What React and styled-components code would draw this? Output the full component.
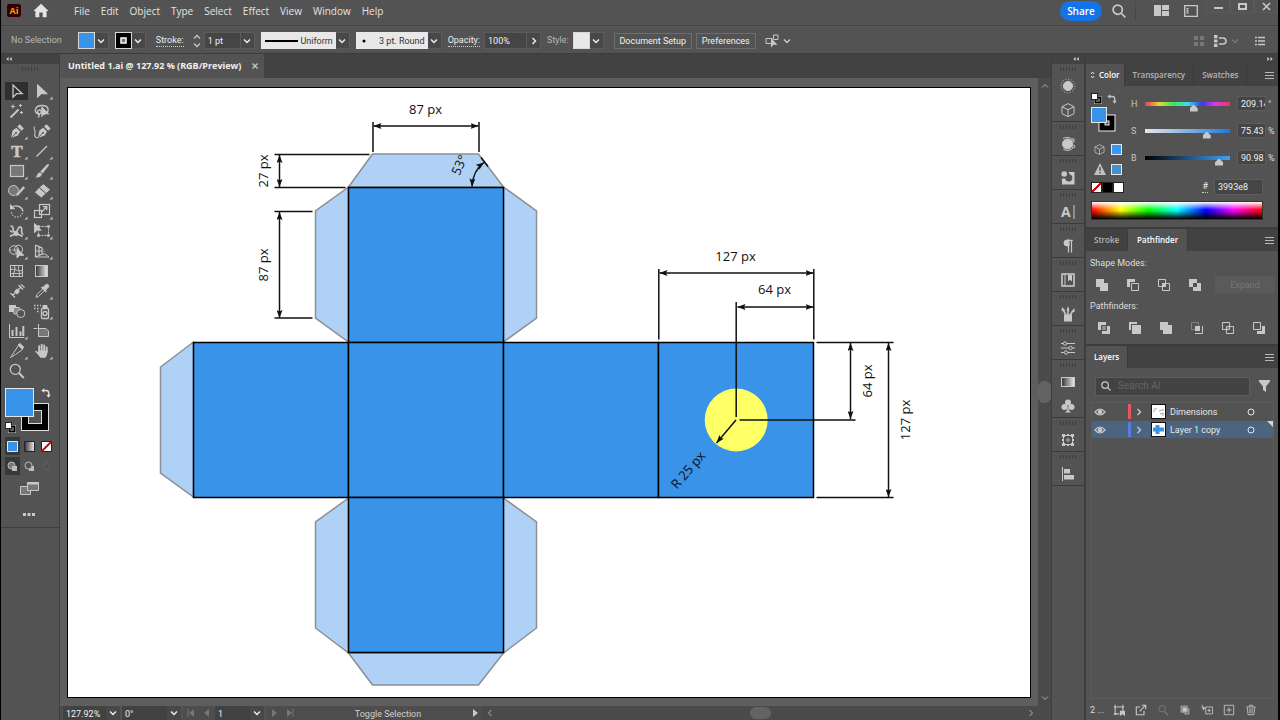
import React from 'react';
import styled, { createGlobalStyle, css } from 'styled-components';

const ui = '"Open Sans", "Noto Sans", sans-serif';
const small = 'Roboto, "Noto Sans", sans-serif';

const GlobalStyle = createGlobalStyle`
* { box-sizing: border-box; }
body {
  margin: 0;
  background: #000;
  color: #dedede;
  font: 9px/12px ${small};
}
button, input, select {
  margin: 0;
  padding: 0;
  border: 0;
  border-radius: 0;
  background: none;
  color: inherit;
  font: inherit;
  outline: 0;
}
svg { display: block; flex: none; }
`;

const Window = styled.div`
height: 100vh;
display: flex;
flex-direction: column;
background: #535353;
border-left: 1px solid #000;
border-right: 2px solid #000;
overflow: hidden;
`;

const MenuBar = styled.header`
display: flex;
align-items: center;
height: 26px;
flex: none;
border-bottom: 1px solid #424242;
padding: 0 0 4px 6px;
color: #e4e4e4;
`;

const Menus = styled.nav`
display: flex;
gap: 11px;
margin-left: 25px;
flex: 1;
`;

const MenuLink = styled.a`
color: inherit;
text-decoration: none;
font: 10px/16px ${ui};
`;

const AppLogo = styled.div`
width: 14px;
height: 13px;
margin-right: 12px;
border-radius: 2px;
background: #330000;
color: #ff9a00;
font: bold 9px/13px ${ui};
text-align: center;
`;

const ShareButton = styled.button`
width: 42px;
height: 20px;
border-radius: 10px;
background: #1473e6;
color: #fff;
font: 600 10px/20px ${ui};
`;

const IconButton = styled.button`
display: flex;
align-items: center;
justify-content: center;
flex: none;
width: ${props => props.$w || 22}px;
height: ${props => props.$h || 20}px;
color: ${props => (props.$dim ? '#777' : '#c8c8c8')};
`;

const WindowButtons = styled.div`
display: flex;
align-self: flex-start;
margin-left: 10px;
button {
  width: 24px;
  height: 13px;
  border: 1px solid #5a5a5a;
  border-top: 0;
}
`;

const Divider = styled.span`
width: 1px;
height: 18px;
background: #484848;
`;

const OptionsBar = styled.div`
display: flex;
align-items: center;
height: 28px;
flex: none;
padding: 1px 8px 0 10px;
border-top: 1px solid #5a5a5a;
border-bottom: 1px solid #3c3c3c;
`;

const Group = styled.div`
display: flex;
align-items: center;
height: 17px;
margin-left: ${props => props.$gap || 6}px;
`;

const OptionLabel = styled.label`
color: ${props => (props.$plain ? '#b8b8b8' : '#ececec')};
${props => !props.$plain && css`border-bottom: 1px dotted #ccc;`}
line-height: 11px;
white-space: nowrap;
`;

const SwatchButton = styled.button`
width: 17px;
height: 17px;
border: 1px solid #d8d8d8;
background: ${props => props.$fill};
display: flex;
align-items: center;
justify-content: center;
`;

const DropCell = styled.button`
width: 14px;
height: 17px;
border: 1px solid #5c5c5c;
border-left: 0;
background: #484848;
color: #f0f0f0;
display: flex;
align-items: center;
justify-content: center;
`;

const Field = styled.input`
width: ${props => props.$w}px;
height: ${props => props.$h || 17}px;
padding-left: 3px;
background: #454545;
border: 1px solid #5c5c5c;
color: #f0f0f0;
`;

const PreviewSelect = styled.div`
display: flex;
align-items: center;
gap: 2px;
width: ${props => props.$w}px;
height: 17px;
padding: 0 3px 0 4px;
background: #e8e8e8;
color: #333;
select {
  flex: 1;
  min-width: 0;
  height: 15px;
  appearance: none;
  text-align: right;
}
`;

const BarButton = styled.button`
height: 16px;
width: ${props => props.$w}px;
border: 1px solid #6e6e6e;
color: #f2f2f2;
white-space: nowrap;
`;

const Spacer = styled.div`
flex: 1;
`;

const Workspace = styled.main`
flex: 1;
min-height: 0;
display: grid;
grid-template-columns: 59px 1fr 34px 192px;
`;

const Column = styled.section`
display: flex;
flex-direction: column;
min-width: 0;
min-height: 0;
background: #535353;
border-right: ${props => props.$line || 0}px solid #3e3e3e;
`;

const CollapseStrip = styled.div`
height: 10px;
flex: none;
display: flex;
align-items: center;
justify-content: ${props => (props.$start ? 'flex-start' : 'flex-end')};
padding: 0 5px;
background: #424242;
color: #c8c8c8;
`;

const Grip = styled.div`
width: 16px;
height: 4px;
margin: 3px auto 2px;
background: repeating-linear-gradient(90deg, #3e3e3e 0 1px, #535353 1px 3px);
`;

const ToolGrid = styled.div`
display: grid;
grid-template-columns: 23px 23px;
grid-auto-rows: 18px;
gap: 2px;
padding: 9px 0 0 4px;
`;

const ToolButton = styled.button`
width: 23px;
height: 18px;
color: #c8c8c8;
background: ${props => (props.$active ? '#2f2f2f' : 'none')};
`;

const PaintWells = styled.div`
padding: 7px 0 0 2px;
`;

const PaintModes = styled.div`
display: grid;
grid-template-columns: repeat(3, 15px);
gap: 2px;
padding: 2px 0 0 4px;
`;

const ModeButton = styled.button`
height: 18px;
display: flex;
align-items: center;
justify-content: center;
background: ${props => (props.$active ? '#383838' : 'none')};
color: ${props => (props.disabled ? '#6a6a6a' : '#bdbdbd')};
`;

const ToolFooter = styled.div`
display: flex;
flex-direction: column;
align-items: center;
gap: 6px;
padding: 3px 2px 3px 0;
border-bottom: 1px solid #3e3e3e;
`;

const TabStrip = styled.div`
display: flex;
height: ${props => props.$h || 22}px;
flex: none;
background: #424242;
`;

const DocTab = styled.div`
display: flex;
align-items: center;
gap: 10px;
padding: 0 5px 0 8px;
background: #535353;
color: #f0f0f0;
font: bold 9px/12px ${ui};
white-space: nowrap;
`;

const Pasteboard = styled.div`
flex: 1;
min-height: 0;
display: grid;
grid-template-columns: 1fr 13px;
background: #5e5e5e;
`;

const ArtboardArea = styled.div`
display: flex;
min-width: 0;
min-height: 0;
padding: 9px 7px 8px 7px;
`;

const Artboard = styled.svg`
flex: 1;
min-width: 0;
background: #fff;
border: 1px solid #000;
font: 13px ${ui};
`;

const Scroll = styled.div`
display: flex;
flex-direction: ${props => (props.$across ? 'row' : 'column')};
flex: 1;
align-items: center;
justify-content: space-between;
padding: ${props => (props.$across ? '0 16px 0 4px' : '4px 0')};
background: #4a4a4a;
color: #b0b0b0;
`;

const Thumb = styled.div`
width: ${props => (props.$across ? 21 : 13)}px;
height: ${props => (props.$across ? 12 : 22)}px;
border-radius: 6px;
background: #636363;
`;

const StatusBar = styled.footer`
height: 14px;
flex: none;
display: flex;
align-items: stretch;
padding-left: 3px;
background: #4d4d4d;
`;

const StatusField = styled.input`
width: ${props => props.$w}px;
padding: 2px 0 0 3px;
background: #424242;
color: #f0f0f0;
`;

const StatusText = styled.div`
flex: 0 0 170px;
padding-left: 10px;
color: #d0d0d0;
line-height: 17px;
text-align: center;
`;

const StatusDrop = styled(DropCell)`
height: 14px;
width: 16px;
border-width: 0 2px 0 0;
border-color: #535353;
`;

const PageButton = styled.button`
width: 16px;
display: flex;
align-items: center;
justify-content: center;
color: #767676;
`;

const DockGroup = styled.div`
display: flex;
flex-direction: column;
align-items: center;
gap: 1px;
border-bottom: 1px solid #3c3c3c;
`;

const Tab = styled.button`
display: flex;
align-items: center;
gap: 4px;
padding: 0 ${props => props.$pad || 8}px;
border-right: 1px solid #3a3a3a;
background: ${props => (props.$active ? '#535353' : 'none')};
color: ${props => (props.$active ? '#fff' : '#b4b4b4')};
font: 600 8px/12px ${ui};
`;

const PanelMenu = styled.button`
width: 18px;
margin-left: auto;
color: #b8b8b8;
display: flex;
align-items: center;
justify-content: center;
`;

const Panel = styled.section`
display: flex;
flex-direction: column;
border-bottom: 2px solid #3c3c3c;
${props => props.$grow && css`flex: 1; border-bottom: 0;`}
`;

const ColorBody = styled.div`
display: grid;
grid-template-columns: 31px 1fr;
column-gap: 9px;
padding: 4px 3px 7px 5px;
`;

const PaintHead = styled.div`
display: flex;
align-items: center;
gap: 5px;
height: 17px;
color: #c0c0c0;
`;

const PaintPair = styled.div`
height: 32px;
`;

const SliderRow = styled.div`
display: grid;
grid-template-columns: 14px 85px 28px 1fr;
align-items: center;
height: 27px;
input[type='text'] { margin-left: 7px; }
span { margin-left: 10px; }
label { color: #c4c4c4; }
`;

const Range = styled.input`
appearance: none;
width: 85px;
height: 14px;
&::-webkit-slider-runnable-track {
  height: 4px;
  background: ${props => props.$track};
}
&::-webkit-slider-thumb {
  appearance: none;
  width: 8px;
  height: 7px;
  margin-top: 3px;
  background: #c8c8c8;
  clip-path: polygon(50% 0, 100% 55%, 100% 100%, 0 100%, 0 55%);
}
`;

const HexRow = styled.div`
display: flex;
align-items: center;
justify-content: space-between;
grid-column: 1 / -1;
padding-right: 12px;
height: 16px;
`;

const Hex = styled.div`
display: flex;
align-items: center;
gap: 6px;
`;

const SwatchRow = styled.div`
display: flex;
align-items: center;
justify-content: space-between;
height: 20px;
padding-left: 3px;
color: #c0c0c0;
`;

const MiniSwatch = styled.button`
width: 11px;
height: 11px;
border: 1px solid #e8e8e8;
background: ${props => props.$fill};
`;

const Trio = styled.div`
display: flex;
button { border: 1px solid #222; }
`;

const Spectrum = styled.div`
grid-column: 1 / -1;
height: 19px;
margin: 6px 12px 0 0;
border: 1px solid #333;
background:
  linear-gradient(#fff, rgba(255, 255, 255, 0) 45%, rgba(0, 0, 0, 0) 50%, #000),
  linear-gradient(90deg, #f00, #ff0 17%, #0f0 33%, #0ff 50%, #00f 67%, #f0f 83%, #f00);
`;

const PathBody = styled.div`
padding: 6px 3px 1px 4px;
h4 {
  margin: 0;
  font: 9px/12px ${small};
}
`;

const PathRow = styled.div`
display: flex;
align-items: center;
height: 31px;
padding-left: ${props => props.$pad}px;
gap: 9px;
color: #c8c8c8;
`;

const ExpandButton = styled.button`
width: 60px;
height: 17px;
margin-left: auto;
background: #5a5a5a;
color: #777;
`;

const LayersBody = styled.div`
flex: 1;
display: flex;
flex-direction: column;
padding: 8px 4px 3px 5px;
`;

const SearchRow = styled.div`
display: flex;
align-items: center;
gap: 8px;
padding: 0 4px 6px 4px;
color: #c8c8c8;
`;

const SearchBox = styled.label`
flex: 1;
display: flex;
align-items: center;
gap: 7px;
height: 19px;
padding-left: 5px;
background: #434343;
border: 1px solid #5c5c5c;
input { width: 120px; }
input::placeholder { color: #646464; font-size: 10px; opacity: 1; }
`;

const LayerList = styled.ul`
flex: 1;
margin: 0;
padding: 0;
list-style: none;
border: 1px solid #5c5c5c;
`;

const LayerRow = styled.li`
display: grid;
grid-template-columns: 36px 3px 20px 15px 1fr 16px 10px;
align-items: center;
height: 17px;
margin-bottom: 1px;
background: ${props => (props.$selected ? '#4b6480' : 'none')};
color: #e8e8e8;
`;

const LayerColor = styled.i`
height: 15px;
background: ${props => props.$color};
`;

const LayerName = styled.span`
padding-left: 4px;
white-space: nowrap;
`;

const LayerThumb = styled.svg`
background: #fff;
border: 1px solid #111;
`;

const Corner = styled.i`
align-self: start;
justify-self: end;
border-top: 6px solid #d8d8d8;
border-left: 6px solid transparent;
`;

const LayerFooter = styled.div`
display: flex;
align-items: center;
justify-content: space-between;
height: 18px;
padding: 0 20px 2px 4px;
color: #d8d8d8;
button { width: 14px; }
`;

// line icon with its own view box
const Svg = ({ w = 14, h = w, children, sw = 1, fill = 'none' }) => (
    <svg width={w} height={h} viewBox={`0 0 ${w} ${h}`} fill={fill} stroke="currentColor" strokeWidth={sw} aria-hidden="true">
        {children}
    </svg>
);

const arrows = {
    down: 'M1 2.5 4 5.5 7 2.5',
    up: 'M1 5.5 4 2.5 7 5.5',
    right: 'M2.5 1 5.5 4 2.5 7',
    left: 'M5.5 1 2.5 4 5.5 7'
};

const Chevron = ({ dir = 'down', sw = 1.4 }) => <Svg w={8} sw={sw}><path d={arrows[dir]} /></Svg>;

const Double = ({ right }) => (
    <svg width="6" height="4" viewBox="0 0 7 5" fill="currentColor" aria-hidden="true">
        <path d={right ? 'M0 0 3 2.5 0 5zM4 0 7 2.5 4 5z' : 'M3 0 0 2.5 3 5zM7 0 4 2.5 7 5z'} />
    </svg>
);

const Lines = () => <Svg w={9}><path d="M0 1.5h9M0 4.5h9M0 7.5h9" /></Svg>;
const Search = ({ w = 14 }) => (
    <svg width={w} height={w} viewBox="0 0 14 14" fill="none" stroke="currentColor" strokeWidth="1.7" aria-hidden="true">
        <circle cx="5.7" cy="5.7" r="4.6" /><path d="m9 9 4.3 4.3" />
    </svg>
);
const Cube = ({ w = 13 }) => (
    <svg width={w} height={w} viewBox="0 0 14 14" fill="none" stroke="currentColor" aria-hidden="true">
        <path d="M7 .8 12.8 3.7v6.8L7 13.3 1.2 10.5V3.7zM1.2 3.7 7 6.6l5.8-2.9M7 6.6v6.7" />
    </svg>
);

const Swap = () => (
    <Svg w={10} sw={1.4}>
        <path d="M2.5 2.5h2.7q2.5 0 2.5 2.5v2.5" /><path d="M3.3.2v4.6L.3 2.5zM5.4 6.8h4.4L7.6 9.8z" fill="currentColor" stroke="none" />
    </Svg>
);

const DefaultPaint = () => (
    <Svg w={11}>
        <rect x="4.5" y="4.5" width="5" height="5" stroke="#ddd" strokeWidth="3" />
        <rect x="4.5" y="4.5" width="5" height="5" stroke="#000" strokeWidth="2" />
        <rect x=".5" y=".5" width="6" height="6" fill="#fff" stroke="#222" />
    </Svg>
);

const nib = <g fill="currentColor" stroke="none"><path d="M6 16 7.6 8.6 11.4 5.8 15.2 9.6 12.8 13.6z" /><path d="m12.3 4.6 2.4-2.4 4.2 4.2-2.4 2.4z" /><path d="m6.3 15.7 4.6-4.6" stroke="#535353" strokeWidth=".9" /><circle cx="11" cy="11" r="1" fill="#535353" /></g>;

// tools are drawn on the 23x18 button; the third value adds the flyout corner
const tools = [
    ['Selection', <path d="M8 3v12.2l3.6-3.5h5.6z" strokeWidth="1.3" />, 0],
    ['Direct Selection', <path d="M7.5 2.5v13l3.8-3.7h6z" fill="currentColor" />, 1],
    ['Magic Wand', <><path d="m5.5 15.5 8-8" strokeWidth="1.8" /><path d="M8 2.5v4M6 4.5h4M15.5 2v3M14 3.5h3M16.5 9v3M15 10.5h3" /></>, 0],
    ['Lasso', <><path d="M9 12.2C3 11 4.5 3.5 12 3.5s8 7 2 8.5M9.5 12c2.8-1.2 1.8-4 0-4s-2.7 2-1.3 3.3c1.4 1.3 1.5 2.7-.2 4.2" strokeWidth="1.4" /><path d="M11.8 5v9.5l2.5-2.7h4.4z" fill="currentColor" /></>, 0],
    ['Pen', nib, 1],
    ['Curvature', <><g transform="translate(1.8)">{nib}</g><path d="M4.5 4.5c-2 3 2 4.5.4 7.2-1 1.8.3 3.8 3.1 4.3" strokeWidth="1.1" /></>, 0],
    ['Type', <text x="12" y="15" textAnchor="middle" fill="currentColor" stroke="currentColor" strokeWidth=".6" fontFamily="Liberation Serif, serif" fontWeight="bold" fontSize="17">T</text>, 1],
    ['Line Segment', <path d="M6.5 14.5 17 4" strokeWidth="1.3" />, 1],
    ['Rectangle', <rect x="5.5" y="3.5" width="13" height="11" fill="#777" strokeWidth="1.2" />, 1],
    ['Paintbrush', <g fill="currentColor" stroke="none"><path d="M18.5 2 19 3.2l-6.4 8.3-2.3-1.9 7-7.4z" /><path d="M9.6 10.4c1.7 0 2.5 1.2 2 2.7-.7 2-3.3 2.8-6.1 2.2 1.8-.8 1-3.8 4.1-4.9z" /></g>, 1],
    ['Shaper', <><circle cx="8.5" cy="8.5" r="5" fill="#777" /><path d="m10.5 14.5.8-3L18.3 4l2 1.8-7 7.6z" fill="currentColor" stroke="#535353" strokeWidth=".5" /></>, 1],
    ['Eraser', <><path d="m10 5.5 3.4-2.8 6 5-3.600 3.200z" fill="currentColor" /><path d="m9.500 6-4 4.300 5.800 4.700 4-3.700z" fill="currentColor" /><path d="m9.500 5.800 6.300 5.400" stroke="#535353" /></>, 1],
    ['Rotate', <><path d="M6.8 5.5C11 2 17.5 5 17.8 9.5" strokeWidth="1.4" /><path d="M17.5 11C15.5 17 6.5 16.3 6.3 9.5" strokeDasharray="1.2 1.6" strokeWidth="1.4" /><path d="M5 1.8v5.4h5.4z" fill="currentColor" stroke="none" /></>, 1],
    ['Scale', <><rect x="9.5" y="2.5" width="10" height="10" strokeWidth="1.2" /><rect x="4.500" y="8.500" width="7" height="7" strokeWidth="1.2" /><path d="m12 9.500 4.500-4.500M13 4.700h3.800v3.600" strokeWidth="1.2" /></>, 1],
    ['Width', <><path d="M5.5 4c5 0 .5 6 4.5 6s2-6 5.5-5c3 1-1 6 2.8 7.5M5 8.5l2.5 2M5 14.5c4-3 8-3 12.5 0" strokeWidth="1.6" /><circle cx="11" cy="11.5" r="2.1" fill="currentColor" /></>, 1],
    ['Free Transform', <><rect x="8.5" y="4.5" width="10" height="9" strokeDasharray="2 1" /><path d="M7.5 3.5h2v2h-2zM17.5 3.5h2v2h-2zM7.5 12.5h2v2h-2zM17.5 12.5h2v2h-2z" fill="currentColor" strokeWidth=".6" /><path d="M4.5 1.5v9.2l2.7-2.6h4z" fill="currentColor" /></>, 1],
    ['Shape Builder', <><ellipse cx="9" cy="8" rx="4.5" ry="4.3" /><ellipse cx="13.5" cy="7.5" rx="4" ry="4.3" /><path d="M5 8h9" strokeDasharray="1.3 1" /><path d="M12 6.5V16l2.8-2.7h4z" fill="currentColor" /></>, 1],
    ['Perspective Grid', <><path d="M5.500 3v12M5.500 3l6.500 3v6l-6.500 3M5.500 9H12M9 4.500v9" strokeWidth="1.2" /><path d="M12 12h3l4 3H5.500" /><path d="M13 9.500h2M13 7.500h1" stroke="#8a8a8a" /></>, 1],
    ['Mesh', <><rect x="5.5" y="3.5" width="12" height="11" /><path d="M5.5 8c4-3 7 3 12 0M5.5 12c3-2 8 1 12-1M9 3.5c3 4-2 7 0 11M14 3.5c-2 4 2 7 0 11" /></>, 0],
    ['Gradient', <><defs><linearGradient id="g1"><stop stopColor="#333" /><stop offset="1" stopColor="#eee" /></linearGradient></defs><rect x="5.5" y="3.5" width="12" height="11" fill="url(#g1)" /></>, 0],
    ['Measure', <><path d="m7.5 13.5 8.5-8.5M5.5 11l4.5 4.5M13.5 3l4.5 4.5M16 2.5l3.5 3" strokeWidth="1.2" /><path d="m9 9.5 3-3 3 3-3 3z" fill="currentColor" stroke="none" /></>, 0],
    ['Eyedropper', <><path d="M12.8 5.7 15.4 3c2-2 4.6.6 2.7 2.6l-2.6 2.6z" fill="currentColor" /><path d="m11.5 5 4.8 4.8" strokeWidth="1.7" /><path d="M12.5 7 7 12.5 6 15.3l2.7-1L14.3 9" /></>, 1],
    ['Blend', <><rect x="4" y="3" width="7" height="7" fill="currentColor" stroke="none" /><rect x="8.500" y="5.500" width="6.500" height="6.500" rx="1.500" fill="#8a8a8a" /><circle cx="15.800" cy="11.500" r="4" fill="#535353" /></>, 0],
    ['Symbol Sprayer', <><rect x="11.5" y="6.5" width="7" height="10" rx="1" strokeWidth="1.3" /><path d="M13 3.5h4v3h-4z" fill="currentColor" /><circle cx="15" cy="11.5" r="2" strokeWidth="1.3" /><path d="M4 3.5h1.5M7 3.5h1.5M10 3.5h1M4 6.5h1.5M7 6.5h1.5M7 9.5h1.5" strokeWidth="1.4" /></>, 1],
    ['Column Graph', <><path d="M4.5 2v13.5h15" /><path d="M7.5 8v6M11.5 5v9M15.5 9.5V14M18.3 4v10" strokeWidth="2" /></>, 1],
    ['Artboard', <><path d="M8.500 2v12M3.500 6.500h4" /><path d="M8.500 6.500H16l2.500 2.500v5.500h-10z" fill="#777" /></>, 0],
    ['Slice', <><path d="m5.5 15.5 8-12 4 4-7 5z" /><path d="m13 3 1.8-1.6 4 3.8-1.7 2" fill="currentColor" /></>, 1],
    ['Hand', <><path d="M9.2 9V4.2M11.7 8.5V2.8M14.2 8.5V3.5M16.7 9.5V5.4" strokeWidth="1.9" strokeLinecap="round" /><path d="M8.2 8.5h9.4c0 4-1 5.5-2.2 7.3h-5C9 14 7.3 11.4 5 9.8c.3-1.4 2-1 3.2.6z" fill="currentColor" stroke="none" /></>, 1],
    ['Zoom', <><circle cx="10.3" cy="7.3" r="5" strokeWidth="1.3" /><path d="m14 11 4.8 5" strokeWidth="2" /></>, 0]
];

const dock = [
    [
        ['Appearance', <><circle cx="8" cy="8" r="4.6" fill="currentColor" /><circle cx="8" cy="8" r="6.9" strokeDasharray="1 1.7" /></>],
        ['3D', <path d="M8 1.6 14 4.7v7L8 14.6l-6-2.9v-7zM2 4.7l6 3 6-3M8 7.7v6.9" />]
    ],
    [['Recolor', <><circle cx="7.5" cy="8" r="5" fill="currentColor" /><path d="M3 2.5C6 .5 12.5 1 14 6.5M14.3 9c-1 5-7 7-11 4" /><circle cx="13" cy="4" r="1.3" fill="#535353" /><circle cx="13.5" cy="10.5" r="1.3" fill="#535353" /></>]],
    [['Symbols', <><circle cx="4.2" cy="4" r="2.8" fill="currentColor" stroke="none" /><path d="M8.5 2H14.5V14.5H2V8.5h3.2a3.6 3.6 0 1 0 4.6-4z" fill="currentColor" stroke="none" /></>]],
    [['Character', <><text x="1" y="13" fill="currentColor" stroke="none" fontFamily="Open Sans, sans-serif" fontWeight="bold" fontSize="14">A</text><path d="M14 1v14" /></>]],
    [['Paragraph', <><path d="M8.5 2v12.5M11.5 2v12.5M12.8 2.4H7" strokeWidth="1.2" /><path d="M9 2v6H7a3 3 0 0 1 0-6z" fill="currentColor" /></>]],
    [['Libraries', <><rect x="2" y="2" width="12" height="12" strokeWidth="1.6" /><path d="M5 2v12" /><path d="M8 3h4v6.5l-2-1.7-2 1.7z" fill="currentColor" stroke="none" /></>]],
    [['Brushes', <><path d="M4 8.500h8v7H4z" fill="currentColor" stroke="none" /><path d="M6 9 3 3.500M8 9V2.500M10 9l3-4" strokeWidth="1.600" /><path d="M1.500 5 2 1l3.500 3.500zM6.500 4.500 8 0l1.500 4.500zM11 6l3.500-4v4z" fill="currentColor" stroke="none" /></>]],
    [['Properties', <><path d="M1 3.5h14M1 8h14M1 12.5h14" /><circle cx="5" cy="3.5" r="1.7" fill="#535353" /><circle cx="10.5" cy="8" r="1.7" fill="#535353" /><circle cx="6" cy="12.5" r="1.7" fill="#535353" /></>]],
    [
        ['Gradient', <rect x="1.5" y="3.5" width="13" height="9" fill="url(#g1)" />],
        ['Symbols library', <g fill="currentColor" stroke="none"><circle cx="8" cy="4.5" r="3" /><circle cx="4.5" cy="9" r="3" /><circle cx="11.5" cy="9" r="3" /><path d="m8 7 1 5.5 2 2H5l2-2z" /></g>]
    ],
    [['Transform', <><rect x="3.5" y="3.5" width="9" height="9" /><path d="M2 2h3v3H2zM11 2h3v3h-3zM2 11h3v3H2zM11 11h3v3h-3zM7 2h2v2H7zM7 12h2v2H7zM2 7h2v2H2zM12 7h2v2h-2z" fill="currentColor" stroke="none" /><path d="M8 6v4M6 8h4" strokeWidth=".8" /></>]],
    [['Align', <><path d="M2.5 1v14" /><path d="M4 3h6v4.5H4zM4 9h10v4.5H4z" fill="currentColor" stroke="none" /></>]]
];

const f = { fill: 'currentColor', stroke: 'none' };
const shapeModes = [
    ['Unite', <path d="M1 1h8v4h4v8H5V9H1z" {...f} />],
    ['Minus Front', <><path d="M1 1h8v3H4v5H1z" {...f} /><path d="M5.5 5.5h7v7h-7z" /></>],
    ['Intersect', <><path d="M1.5 1.5h7v7h-7zM5.5 5.5h7v7h-7z" /><path d="M5 5h4v4H5z" {...f} /></>],
    ['Exclude', <path d="M1 1h8v4h4v8H5V9H1zM5 5v4h4V5z" fillRule="evenodd" {...f} />]
];
const pathfinders = [
    ['Divide', <><path d="M1 1h8v3H4v5H1zM10 5h3v8H5v-3h5z" {...f} /><path d="M5 5h4v4H5z" fill="currentColor" fillOpacity=".5" stroke="none" /></>],
    ['Trim', <><path d="M1 1h8v2H3v6H1z" {...f} /><path d="M4 4h9v9H4z" {...f} /></>],
    ['Merge', <path d="M1 1h8v3h4v9H4V9H1z" {...f} />],
    ['Crop', <><path d="M1.5 1.5h7v7h-7z" strokeOpacity=".4" /><path d="M12.5 5v7.5H5" /><path d="M5 5h5v5H5z" {...f} /></>],
    ['Outline', <><path d="M1.5 1.5h7v7h-7zM5.5 5.5h7v7h-7z" /><circle cx="7" cy="7" r="1.5" strokeWidth=".7" /></>],
    ['Minus Back', <><path d="M1.5 1.5h7v7h-7z" /><path d="M10 5h3v8H5v-3h5z" {...f} /></>]
];

const layerActions = [
    ['Collect', <><path d="M2.5 1v12M1 3.5h12M11.5 1v7M1 11.5h6" strokeWidth="1.3" /><path d="M8 8h6v6l-3-2-3 2z" {...f} /></>],
    ['Export', <path d="M6 3.5H1.5v9h9V8M5.5 8.5l6.5-7M8 1.5h4.5V6" strokeWidth="1.3" />],
    ['Locate', <><circle cx="6" cy="5.5" r="3.8" strokeOpacity=".35" /><path d="m9 9 4 4" strokeOpacity=".35" strokeWidth="1.5" /></>],
    ['Clipping Mask', <><path d="M2.5 2.5h7v7h-7zM6 11.5h5.5V5" /><path d="M4 4h5v5H4z" {...f} /></>],
    ['Sublayer', <><path d="M5.5 3.5h8v8h-8zM9.5 5.5v4M7.5 7.5h4M1.5 1v4H4" /><path d="M2.500 2.500 5 5 2.500 7.500z" {...f} /></>],
    ['New Layer', <path d="M1.5 1.5h11v11h-11zM7 4v6M4 7h6" />],
    ['Delete', <><path d="M1.5 3.5h11M5 3V1.5h4V3M2.8 4l.7 8.5h7l.7-8.5" /><path d="M5.5 5v6M7 5v6M8.5 5v6" strokeWidth=".8" /></>]
];

const flaps = [
    '348,187 372,154 478,154 503,187',
    '348,187 315,211 315,318 348,342',
    '503,187 536,211 536,318 503,342',
    '193,342 160,367 160,473 193,497',
    '348,498 315,522 315,628 348,653',
    '503,498 536,522 536,628 503,653',
    '348,653 372,685 478,685 503,653'
];

const faces = [
    [348, 187],
    [193, 342],
    [348, 342],
    [503, 342],
    [658, 342],
    [348, 497]
];

// [x1, y1, x2, y2] of every line that carries a head at both ends
const measures = [
    [373, 126, 478, 126],
    [279, 155, 279, 187],
    [279, 212, 279, 318],
    [659, 273, 813, 273],
    [737, 307, 813, 307],
    [850, 343, 850, 419],
    [888, 343, 888, 497]
];

const labels = [
    ['87 px', 425, 114, 0],
    ['27 px', 267, 171, -90],
    ['87 px', 267, 265, -90],
    ['127 px', 735, 261, 0],
    ['64 px', 774, 294, 0],
    ['64 px', 871, 381, -90],
    ['127 px', 909, 420, -90],
    ['R 25 px', 691, 473, -49],
    ['53°', 463, 167, -65]
];

const BoxNet = () => (
    <Artboard viewBox="68 88 961 609" role="img" aria-label="Box net with dimensions">
        <defs>
            <marker id="head" viewBox="0 0 8 6" refX="8" refY="3" markerWidth="8" markerHeight="6" markerUnits="userSpaceOnUse" orient="auto-start-reverse">
                <path d="M0 0 8 3 0 6 1.5 3z" fill="#111" />
            </marker>
        </defs>
        <g fill="#b0d1f6" stroke="#8b8f94" strokeWidth="1.5">
            {flaps.map(points => <polygon key={points} points={points} />)}
        </g>
        <g fill="#3993e8" stroke="#000" strokeWidth="1.5">
            {faces.map(([x, y]) => <rect key={`${x}-${y}`} x={x} y={y + 0.5} width="155" height="155" />)}
        </g>
        <circle cx="735.7" cy="420" r="31.5" fill="#ffff66" />
        <g fill="none" stroke="#111" strokeWidth="1.5">
            <path d="M372.5 122v30M478.5 122v30M274 154.500h95M274 187.500h71M274 211.500h38M274 318h38" />
            <path d="M658.3 269v70.500M813.3 269v70.500M735.7 302v115M739 420h116M816 342.500h77M816 497.500h77" />
            {measures.map(([x1, y1, x2, y2]) => (
                <line key={`${x1}-${y1}`} x1={x1} y1={y1} x2={x2} y2={y2} markerStart="url(#head)" markerEnd="url(#head)" />
            ))}
            <line x1="735.5" y1="420" x2="716" y2="443" markerEnd="url(#head)" />
            <path d="M471.5 186.5C472 176 476 168 483.5 162.500" markerStart="url(#head)" markerEnd="url(#head)" />
            <path d="m480.5 157.5 7 9" />
        </g>
        {labels.map(([text, x, y, turn]) => (
            <text key={`${x}-${y}`} x={x} y={y} textAnchor="middle" transform={`rotate(${turn} ${x} ${y})`} fill="#111">{text}</text>
        ))}
    </Artboard>
);

const Wells = () => (
    <Svg w={50} h={48}>
        <rect x="18.5" y="16.5" width="27" height="27" fill="#000" stroke="#ddd" />
        <rect x="25.5" y="23.5" width="13" height="13" fill="#535353" stroke="#ddd" />
        <rect x="2.5" y="1.5" width="28" height="28" fill="#3993e8" stroke="#e6e6e6" />
        <g transform="translate(38 1)"><path d="M2.5 2.5h2.7q2.5 0 2.5 2.5v2.5" strokeWidth="1.4" /><path d="M3.3.2v4.6L.3 2.5zM5.4 6.8h4.4L7.6 9.8z" {...f} /></g>
        <g transform="translate(2 35)"><rect x="4.5" y="4.5" width="5" height="5" stroke="#ddd" strokeWidth="3" /><rect x="4.5" y="4.5" width="5" height="5" stroke="#000" strokeWidth="2" /><rect x=".5" y=".5" width="6" height="6" fill="#fff" stroke="#222" /></g>
    </Svg>
);

const menus = ['File', 'Edit', 'Object', 'Type', 'Select', 'Effect', 'View', 'Window', 'Help'];

const TopBar = () => (
    <MenuBar>
        <AppLogo>Ai</AppLogo>
        <Svg w={16} h={15}><path d="M8 .8 15.6 8h-2v6.300H9.700V9.500H6.300v4.800H2.400V8h-2z" {...f} /></Svg>
        <Menus>{menus.map(name => <MenuLink key={name} href="#">{name}</MenuLink>)}</Menus>
        <ShareButton>Share</ShareButton>
        <IconButton $w={33} aria-label="Search"><Search /></IconButton>
        <Divider />
        <IconButton $w={50} aria-label="Arrange"><Svg w={15} h={11}><path d="M0 0h7v11H0zM8 0h7v5H8zM8 6h7v5H8z" {...f} /></Svg></IconButton>
        <IconButton $w={10} aria-label="Workspace"><Svg w={14} h={12}><path d="M.7.7h12.600v10.600H.7z" strokeWidth="1.3" /><path d="M3.500 3v6" strokeWidth="2" strokeDasharray="1.5 .5" /></Svg></IconButton>
        <WindowButtons>
            <IconButton aria-label="Minimize"><Svg w={9} sw={2}><path d="M0 6h9" /></Svg></IconButton>
            <IconButton aria-label="Maximize"><Svg w={9} h={7} sw={2}><path d="M1 1h7v5H1z" /></Svg></IconButton>
            <IconButton aria-label="Close"><Svg w={9} sw={1.6}><path d="m1 1 7 7M8 1 1 8" /></Svg></IconButton>
        </WindowButtons>
    </MenuBar>
);

const Options = () => (
    <OptionsBar>
        <OptionLabel as="span" $plain>No Selection</OptionLabel>
        <Group $gap={16}>
            <SwatchButton $fill="#3993e8" aria-label="Fill" />
            <DropCell aria-label="Fill options"><Chevron /></DropCell>
        </Group>
        <Group>
            <SwatchButton $fill="#000" aria-label="Stroke"><Svg w={7} sw={1.5}><path d="M1 1h5v5H1z" fill="#777" stroke="#fff" /></Svg></SwatchButton>
            <DropCell aria-label="Stroke options"><Chevron /></DropCell>
        </Group>
        <Group $gap={10}>
            <OptionLabel htmlFor="weight">Stroke:</OptionLabel>
        </Group>
        <Group>
            <IconButton $w={14} aria-label="Step weight"><Svg w={8} h={14} sw={1.3}><path d="M1 4.5 4 1.5 7 4.5M1 9.5 4 12.5 7 9.5" /></Svg></IconButton>
            <Field id="weight" $w={37} defaultValue="1 pt" />
            <DropCell aria-label="Weights"><Chevron /></DropCell>
        </Group>
        <Group>
            <PreviewSelect $w={75}>
                <Svg w={33} h={2} sw={2}><path d="M0 1h33" stroke="#000" /></Svg>
                <select aria-label="Width profile"><option>Uniform</option></select>
            </PreviewSelect>
            <DropCell aria-label="Profiles"><Chevron /></DropCell>
        </Group>
        <Group>
            <PreviewSelect $w={72}>
                <Svg w={8}><circle cx="4" cy="4" r="1.5" fill="#000" stroke="none" /></Svg>
                <select aria-label="Brush"><option>3 pt. Round</option></select>
            </PreviewSelect>
            <DropCell aria-label="Brushes"><Chevron /></DropCell>
        </Group>
        <Group>
            <OptionLabel htmlFor="opacity">Opacity:</OptionLabel>
        </Group>
        <Group $gap={4}>
            <Field id="opacity" $w={43} defaultValue="100%" />
            <DropCell aria-label="Opacity slider"><Chevron dir="right" /></DropCell>
        </Group>
        <Group>
            <OptionLabel as="span" $plain>Style:</OptionLabel>
        </Group>
        <Group $gap={4}>
            <SwatchButton $fill="#e8e8e8" aria-label="Style" />
            <DropCell aria-label="Styles"><Chevron /></DropCell>
        </Group>
        <Group $gap={10}><BarButton $w={78}>Document Setup</BarButton></Group>
        <Group $gap={4}><BarButton $w={60}>Preferences</BarButton></Group>
        <Group>
            <IconButton $w={20} aria-label="Select similar"><Svg w={14}><path d="M1 4.5h6v5H1zM8.5 1h4.5v4.5H8.5z" /><path d="M6 4v9.5l2.5-2.7h4z" {...f} /></Svg></IconButton>
            <IconButton $w={10} aria-label="More"><Chevron /></IconButton>
        </Group>
        <Spacer />
        <IconButton $dim aria-label="Snap grid"><Svg w={10}><path d="M0 0h4v4H0zM6 0h4v4H6zM0 6h4v4H0zM6 6h4v4H6z" {...f} /></Svg></IconButton>
        <IconButton $w={20} aria-label="Snap"><Svg w={13} h={12}><path d="M0 0h3.5v3.200H0zM0 4.400h3.500v3.200H0zM0 8.800h3.500V12H0z" {...f} /><path d="M5 3h4q3 0 3 3t-3 3H5" strokeWidth="1.6" /></Svg></IconButton>
        <IconButton $dim $w={10} aria-label="Snap options"><Chevron /></IconButton>
        <Group $gap={10}><IconButton $w={20} aria-label="Panel menu"><Svg w={10} sw={1.3}><path d="M0 1.5h2M0 5h2M0 8.5h2M3 1.5h7M3 5h7M3 8.5h7" /></Svg></IconButton></Group>
    </OptionsBar>
);

const Tools = () => (
    <Column $line={1}>
        <CollapseStrip $start><Double /></CollapseStrip>
        <Grip />
        <ToolGrid>
            {tools.map(([name, art, flyout], i) => (
                <ToolButton key={name} $active={i === 0} aria-label={name}>
                    <Svg w={23} h={18}>{art}{flyout ? <path d="M22.5 14.5v3h-3z" {...f} /> : null}</Svg>
                </ToolButton>
            ))}
        </ToolGrid>
        <PaintWells><Wells /></PaintWells>
        <PaintModes>
            <ModeButton $active aria-label="Color"><Svg w={11}><path d="M.5.5h10v10H.5z" fill="#3993e8" stroke="#e8e8e8" /></Svg></ModeButton>
            <ModeButton aria-label="Gradient"><Svg w={11}><path d="M.5.5h10v10H.5z" fill="url(#g1)" stroke="#222" /></Svg></ModeButton>
            <ModeButton aria-label="None"><Svg w={11}><path d="M.5.5h10v10H.5z" fill="#fff" stroke="#222" /><path d="m1 10 9-9" stroke="#d00" strokeWidth="2" /></Svg></ModeButton>
            <ModeButton $active aria-label="Draw Normal"><Svg w={11}><circle cx="4.5" cy="4.5" r="3.5" fill="#777" /><path d="M5 5h5v5H5z" {...f} /></Svg></ModeButton>
            <ModeButton aria-label="Draw Behind"><Svg w={11}><path d="M5 5h5v5H5z" {...f} /><circle cx="4.5" cy="4.5" r="3.5" fill="#535353" /></Svg></ModeButton>
            <ModeButton disabled aria-label="Draw Inside"><Svg w={11}><circle cx="5.5" cy="5.5" r="3.5" strokeDasharray="2 1" /></Svg></ModeButton>
        </PaintModes>
        <ToolFooter>
            <IconButton aria-label="Screen mode"><Svg w={19} h={13}><path d="M.5 4.5h10v8H.5z" fill="#777" /><path d="M7.5.5h11v8h-11z" fill="#777" /><path d="M7.5 1.5h11" strokeWidth="2" /></Svg></IconButton>
            <IconButton aria-label="Edit toolbar"><Svg w={12} h={3}><path d="M0 0h3v3H0zM4.5 0h3v3h-3zM9 0h3v3H9z" {...f} /></Svg></IconButton>
        </ToolFooter>
    </Column>
);

const Document = () => (
    <Column $line={1}>
        <TabStrip $h={24}>
            <DocTab>Untitled 1.ai @ 127.92 % (RGB/Preview)<IconButton $w={8} aria-label="Close tab"><Svg w={6} sw={1.3}><path d="m.5.5 5 5M5.5.5l-5 5" /></Svg></IconButton></DocTab>
        </TabStrip>
        <Pasteboard>
            <ArtboardArea><BoxNet /></ArtboardArea>
            <Scroll><Chevron dir="up" sw={1} /><Thumb /><Chevron sw={1} /></Scroll>
        </Pasteboard>
        <StatusBar>
            <StatusField $w={43} defaultValue="127.92%" aria-label="Zoom" />
            <StatusDrop aria-label="Zoom levels"><Chevron /></StatusDrop>
            <StatusField $w={45} defaultValue="0°" aria-label="Rotation" />
            <StatusDrop aria-label="Angles"><Chevron /></StatusDrop>
            <PageButton aria-label="First"><Svg w={8}><path d="M1 0v8" /><path d="M7 0v8L2 4z" {...f} /></Svg></PageButton>
            <PageButton aria-label="Previous"><Svg w={8}><path d="M6 0v8L1 4z" {...f} /></Svg></PageButton>
            <StatusField $w={35} defaultValue="1" aria-label="Artboard" />
            <StatusDrop aria-label="Artboards"><Chevron /></StatusDrop>
            <PageButton aria-label="Next"><Svg w={8}><path d="M2 0v8l5-4z" {...f} /></Svg></PageButton>
            <PageButton aria-label="Last"><Svg w={8}><path d="M7 0v8" /><path d="M1 0v8l5-4z" {...f} /></Svg></PageButton>
            <StatusText>Toggle Selection</StatusText>
            <IconButton $w={14} $h={14} aria-label="Status menu"><Svg w={8}><path d="M2 0v8l5-4z" {...f} /></Svg></IconButton>
            <Scroll $across><Chevron dir="left" sw={1} /><Thumb $across /><Chevron dir="right" sw={1} /></Scroll>
        </StatusBar>
    </Column>
);

const Dock = () => (
    <Column $line={2}>
        <CollapseStrip><Double /></CollapseStrip>
        {dock.map(group => (
            <DockGroup key={group[0][0]}>
                <Grip as="span" />
                {group.map(([name, art]) => (
                    <IconButton key={name} $h={23} $w={32} aria-label={name}><Svg w={16}>{art}</Svg></IconButton>
                ))}
            </DockGroup>
        ))}
    </Column>
);

const sliders = [
    ['H', 'Hue', 360, 209, '209.14', '°', 'linear-gradient(90deg, #e8395a, #e8d839 17%, #39e85a 33%, #39e0e8 50%, #3939e8 67%, #e039e8 83%, #e83950)'],
    ['S', 'Saturation', 100, 75, '75.43', '%', 'linear-gradient(90deg, #e8e8e8, #1a7ae0)'],
    ['B', 'Brightness', 100, 91, '90.98', '%', 'linear-gradient(90deg, #000, #3fa0f8)']
];

const ColorPanel = () => (
    <Panel>
        <TabStrip>
            <Tab $active $pad={4}><Svg w={5} h={8} sw={0.8}><path d="M1 3 2.500 1 4 3M1 5l1.500 2L4 5" /></Svg>Color</Tab>
            <Tab>Transparency</Tab>
            <Tab>Swatches</Tab>
            <PanelMenu aria-label="Color menu"><Lines /></PanelMenu>
        </TabStrip>
        <ColorBody>
            <div>
                <PaintHead><DefaultPaint /><Swap /></PaintHead>
                <PaintPair>
                    <Svg w={26} h={26}>
                        <rect x="11" y="11" width="10" height="10" stroke="#eee" strokeWidth="7" />
                        <rect x="11" y="11" width="10" height="10" stroke="#000" strokeWidth="5" />
                        <rect x=".5" y=".5" width="15" height="15" fill="#3993e8" stroke="#e6e6e6" />
                    </Svg>
                </PaintPair>
                <SwatchRow><Cube w={11} /><MiniSwatch $fill="#3399ff" aria-label="Web color" /></SwatchRow>
                <SwatchRow><Svg w={12}><path d="M6 0 12 12H0zM5.3 4v4h1.400V4zM5.3 9v1.500h1.400V9z" fillRule="evenodd" {...f} /></Svg><MiniSwatch $fill="#4a8ecb" aria-label="Gamut color" /></SwatchRow>
            </div>
            <div>
                {sliders.map(([letter, name, max, value, text, unit, track]) => (
                    <SliderRow key={letter}>
                        <label htmlFor={name}>{letter}</label>
                        <Range id={name} type="range" max={max} defaultValue={value} $track={track} />
                        <Field type="text" $w={29} $h={15} defaultValue={text} aria-label={`${name} value`} />
                        <span>{unit}</span>
                    </SliderRow>
                ))}
            </div>
            <HexRow>
                <Trio>
                    <MiniSwatch $fill="linear-gradient(135deg, #fff 42%, #d00 42% 58%, #fff 58%)" aria-label="None" />
                    <MiniSwatch $fill="#000" aria-label="Black" />
                    <MiniSwatch $fill="#fff" aria-label="White" />
                </Trio>
                <Hex><OptionLabel htmlFor="hex">#</OptionLabel><Field id="hex" $w={49} $h={16} defaultValue="3993e8" /></Hex>
            </HexRow>
            <Spectrum />
        </ColorBody>
    </Panel>
);

const PathfinderPanel = () => (
    <Panel>
        <TabStrip>
            <Tab>Stroke</Tab>
            <Tab $active $pad={9}>Pathfinder</Tab>
            <PanelMenu aria-label="Pathfinder menu"><Lines /></PanelMenu>
        </TabStrip>
        <PathBody>
            <h4>Shape Modes:</h4>
            <PathRow $pad={1}>
                {shapeModes.map(([name, art]) => <IconButton key={name} aria-label={name}><Svg>{art}</Svg></IconButton>)}
                <ExpandButton disabled>Expand</ExpandButton>
            </PathRow>
            <h4>Pathfinders:</h4>
            <PathRow $pad={3}>
                {pathfinders.map(([name, art]) => <IconButton key={name} aria-label={name}><Svg>{art}</Svg></IconButton>)}
            </PathRow>
        </PathBody>
    </Panel>
);

const Eye = () => <Svg w={12} h={8} sw={1.2}><path d="M1 4q5-6 10 0-5 6-10 0z" /><circle cx="6" cy="4" r="1.7" fill="currentColor" /></Svg>;

const layers = [
    ['Dimensions', '#e05a5e', <path d="M2 4h3M2 5v2M7 6l3-1M8 9l3-1v3M11 4v2" stroke="#888" strokeWidth=".8" fill="none" />],
    ['Layer 1 copy', '#5a7ae8', <path d="M1 4.500h11v4H1zM3.500 2h4v9h-4z" fill="#3993e8" />]
];

const LayersPanel = () => (
    <Panel $grow>
        <TabStrip>
            <Tab $active>Layers</Tab>
            <PanelMenu aria-label="Layers menu"><Lines /></PanelMenu>
        </TabStrip>
        <LayersBody>
            <SearchRow>
                <SearchBox><Search w={10} /><input placeholder="Search Al" aria-label="Search layers" /></SearchBox>
                <IconButton $w={12} aria-label="Filter"><Svg w={11} h={12}><path d="M0 0h11v1.500L7 6.500V12L4 10V6.500L0 1.500z" {...f} /></Svg></IconButton>
            </SearchRow>
            <LayerList>
                {layers.map(([name, color, art], i) => (
                    <LayerRow key={name} $selected={i === 1}>
                        <IconButton $w={16} $h={16} aria-label={`Toggle ${name}`}><Eye /></IconButton>
                        <LayerColor $color={color} />
                        <IconButton $w={16} $h={16} aria-label={`Open ${name}`}><Chevron dir="right" /></IconButton>
                        <LayerThumb width="15" height="15" viewBox="0 0 13 13">{art}</LayerThumb>
                        <LayerName>{name}</LayerName>
                        <Svg w={8}><circle cx="4" cy="4" r="3" /></Svg>
                        {i === 1 && <Corner />}
                    </LayerRow>
                ))}
            </LayerList>
        </LayersBody>
        <LayerFooter>
            <span>2 ...</span>
            {layerActions.map(([name, art]) => <IconButton key={name} aria-label={name}><svg width="12" height="12" viewBox="0 0 14 14" fill="none" stroke="currentColor">{art}</svg></IconButton>)}
        </LayerFooter>
    </Panel>
);

export default function App() {
    return (
        <>
            <GlobalStyle />
            <Window>
                <TopBar />
                <Options />
                <Workspace>
                    <Tools />
                    <Document />
                    <Dock />
                    <Column>
                        <CollapseStrip><Double right /></CollapseStrip>
                        <ColorPanel />
                        <PathfinderPanel />
                        <LayersPanel />
                    </Column>
                </Workspace>
            </Window>
        </>
    );
}
